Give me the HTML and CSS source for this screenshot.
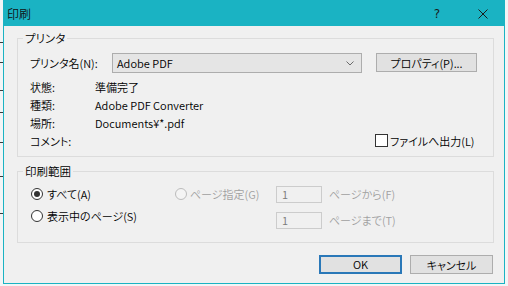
FILE: index.html
```html
<!DOCTYPE html>
<html lang="ja">
<head>
<meta charset="utf-8">
<title>印刷</title>
<link rel="stylesheet" href="styles.css">
</head>
<body>
<div class="win">
  <div class="titlebar">
    <span class="title">印刷</span>
    <span class="help">?</span>
    <span class="close"><svg width="10" height="10" viewBox="0 0 10 10"><path d="M0.5 0.5L9.5 9.5M9.5 0.5L0.5 9.5" stroke="#1b1b1b" stroke-width="1" fill="none"/></svg></span>
  </div>
  <div class="content">
    <fieldset class="group">
      <legend>プリンタ</legend>
      <div class="gbody printer">
        <div class="name-row">
          <span class="name-label">プリンタ名(N):</span>
          <div class="select"><span class="sel-text">Adobe PDF</span><svg class="chev" width="8" height="5" viewBox="0 0 8 5"><path d="M0.5 0.5L4 4L7.5 0.5" stroke="#6b6b6b" stroke-width="1" fill="none"/></svg></div>
          <button class="btn prop">プロパティ(P)...</button>
        </div>
        <div class="info">
          <span class="k">状態:</span><span class="v">準備完了</span><span></span>
          <span class="k">種類:</span><span class="v">Adobe PDF Converter</span><span></span>
          <span class="k">場所:</span><span class="v">Documents¥*.pdf</span><span></span>
          <span class="k">コメント:</span><span class="v"></span>
          <label class="check"><span class="box"></span><span>ファイルへ出力(L)</span></label>
        </div>
      </div>
    </fieldset>
    <fieldset class="group range">
      <legend>印刷範囲</legend>
      <div class="gbody range-body">
        <div class="left-radios">
          <div class="radio-item"><span class="radio checked"></span><span>すべて(A)</span></div>
          <div class="radio-item"><span class="radio"></span><span>表示中のページ(S)</span></div>
        </div>
        <div class="pages">
          <div class="radio-item disabled"><span class="radio"></span><span>ページ指定(G)</span></div>
          <div class="num">1</div>
          <span class="ptext">ページから(F)</span>
          <span></span>
          <div class="num">1</div>
          <span class="ptext">ページまで(T)</span>
        </div>
      </div>
    </fieldset>
    <div class="buttons">
      <button class="btn dlg default">OK</button>
      <button class="btn dlg">キャンセル</button>
    </div>
  </div>
</div>
</body>
</html>
```
FILE: styles.css
```css
* { box-sizing: border-box; }
html, body { margin: 0; padding: 0; }
body {
  width: 508px;
  height: 286px;
  overflow: hidden;
  font-family: "Noto Sans CJK JP", sans-serif;
  font-size: 11px;
  font-weight: 350;
  font-feature-settings: "palt";
  color: #000;
  background:
    linear-gradient(#3a3a3a, #3a3a3a) 0 42px / 3px 1px no-repeat,
    linear-gradient(#3a3a3a, #3a3a3a) 0 62px / 3px 1px no-repeat,
    linear-gradient(#3a3a3a, #3a3a3a) 0 90px / 3px 1px no-repeat,
    linear-gradient(#3a3a3a, #3a3a3a) 0 112px / 3px 1px no-repeat,
    linear-gradient(#3a3a3a, #3a3a3a) 0 142px / 3px 1px no-repeat,
    linear-gradient(#3a3a3a, #3a3a3a) 0 176px / 3px 1px no-repeat,
    linear-gradient(#3a3a3a, #3a3a3a) 0 213px / 3px 1px no-repeat,
    #f2f5f6;
}
.win {
  margin-left: 3px;
  width: 502px;
  height: 284px;
  border: 1px solid #1ab3c3;
  background: #f0f0f0;
  display: flex;
  flex-direction: column;
}
.titlebar {
  height: 25px;
  flex: none;
  background: #1ab3c3;
  display: flex;
  align-items: center;
  padding-left: 3px;
  line-height: 16px;
}
.title { flex: 1; color: #111; font-size: 12px; }
.help {
  width: 10px;
  margin-right: 36px;
  text-align: center;
  font-family: "DejaVu Sans", sans-serif;
  font-size: 12px;
  font-weight: 400;
  color: #1b1b1b;
}
.close { width: 10px; height: 10px; margin-right: 16px; display: flex; }
.content { padding: 5px 10px 0 13px; }
.group {
  margin: 0;
  padding: 0;
  border: 1px solid #dcdcdc;
  min-inline-size: 0;
}
.group legend {
  margin-left: 5px;
  padding: 0 2px;
  line-height: 14px;
  font-size: 11.5px;
}
.range { margin-top: 7px; }
.printer { padding: 8px 11px 6px 12px; }
.name-row { display: flex; align-items: flex-start; }
.name-label { width: 82px; line-height: 20px; }
.select {
  width: 250px;
  height: 20px;
  border: 1px solid #adadad;
  background: #e5e5e5;
  display: flex;
  align-items: center;
  padding: 0 7px 0 4px;
}
.sel-text { flex: 1; line-height: 18px; }
.chev { display: block; }
.btn {
  font-family: inherit;
  font-size: 11px;
  font-weight: 350;
  font-feature-settings: "palt";
  color: #000;
  background: #e1e1e1;
  border: 1px solid #adadad;
  padding: 0;
  margin: 0;
  line-height: 16px;
}
.prop { margin-left: 14px; width: 101px; height: 19px; }
.info {
  margin-top: 5px;
  display: grid;
  grid-template-columns: 65px 280px 1fr;
  grid-auto-rows: 18px;
  line-height: 18px;
}
.check { display: flex; align-items: center; gap: 2px; }
.box {
  width: 13px;
  height: 13px;
  border: 1px solid #333;
  background: #fff;
  margin-top: -1px;
}
.range-body { display: flex; padding: 5px 0 13px 13px; }
.left-radios { width: 144px; display: flex; flex-direction: column; }
.radio-item { display: flex; align-items: center; gap: 4px; height: 22px; }
.radio {
  width: 12px;
  height: 12px;
  border-radius: 50%;
  border: 1px solid #333;
  background: #fff;
  display: flex;
  align-items: center;
  justify-content: center;
}
.radio.checked::after {
  content: "";
  width: 6px;
  height: 6px;
  border-radius: 50%;
  background: #333;
}
.pages {
  margin-top: 2px;
  display: grid;
  grid-template-columns: 101px 46px auto;
  grid-template-rows: 18px 18px;
  row-gap: 8px;
  align-items: center;
}
.pages .radio-item { height: 18px; gap: 3px; color: #a0a0a0; }
.pages .radio-item .radio { border-color: #bcbcbc; background: #f4f4f4; }
.num {
  width: 46px;
  height: 17px;
  border: 1px solid #cccccc;
  background: #f0f0f0;
  color: #7a7a7a;
  padding-left: 5px;
  line-height: 15px;
}
.ptext { margin-left: 7px; color: #a0a0a0; }
.buttons {
  display: flex;
  justify-content: flex-end;
  gap: 8px;
  margin-top: 12px;
  padding-right: 1px;
}
.dlg { width: 83px; height: 19px; }
.default { border: 2px solid #2a78b8; line-height: 15px; }
```
